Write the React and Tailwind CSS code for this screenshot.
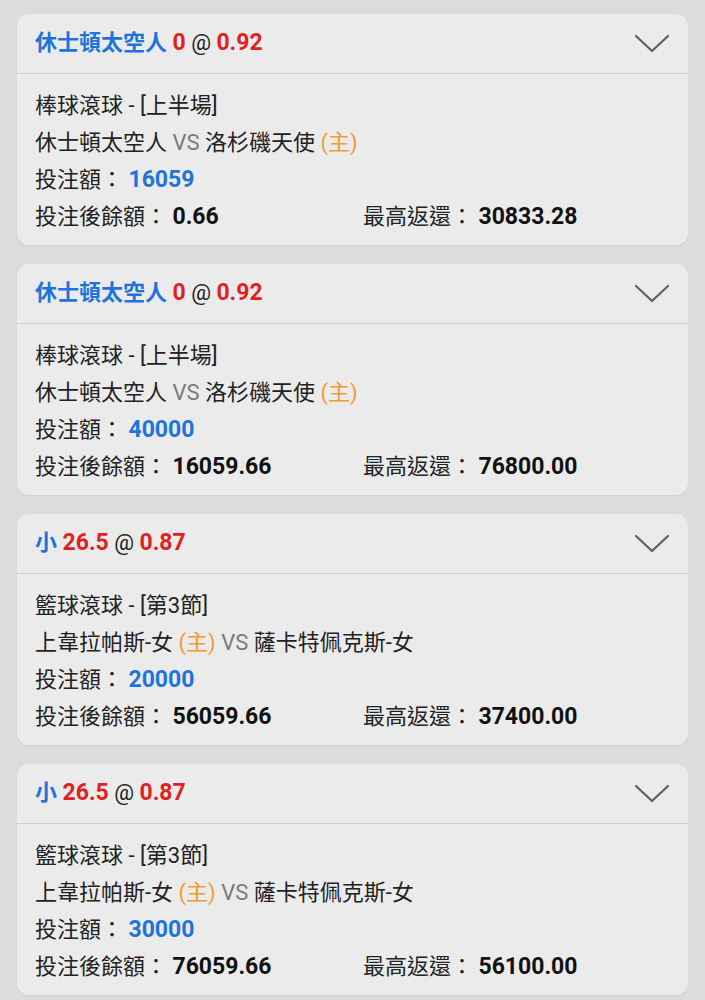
const bets = [
  {
    pick: "休士頓太空人",
    line: "0",
    odds: "0.92",
    league: "棒球滾球 - [上半場]",
    home: "休士頓太空人",
    away: "洛杉磯天使",
    homeFirst: false,
    stake: "16059",
    balance: "0.66",
    payout: "30833.28",
  },
  {
    pick: "休士頓太空人",
    line: "0",
    odds: "0.92",
    league: "棒球滾球 - [上半場]",
    home: "休士頓太空人",
    away: "洛杉磯天使",
    homeFirst: false,
    stake: "40000",
    balance: "16059.66",
    payout: "76800.00",
  },
  {
    pick: "小",
    line: "26.5",
    odds: "0.87",
    league: "籃球滾球 - [第3節]",
    home: "上韋拉帕斯-女",
    away: "薩卡特佩克斯-女",
    homeFirst: true,
    stake: "20000",
    balance: "56059.66",
    payout: "37400.00",
  },
  {
    pick: "小",
    line: "26.5",
    odds: "0.87",
    league: "籃球滾球 - [第3節]",
    home: "上韋拉帕斯-女",
    away: "薩卡特佩克斯-女",
    homeFirst: true,
    stake: "30000",
    balance: "76059.66",
    payout: "56100.00",
  },
];

const Chevron = () => (
  <svg width="36" height="22" viewBox="0 0 36 22" fill="none">
    <path d="M2 3 L18 18 L34 3" stroke="#5f5f5f" strokeWidth="2.2" strokeLinecap="round" strokeLinejoin="round" />
  </svg>
);

const Main = () => <span className="text-[#f29a2e]">(主)</span>;

const BetCard = ({ bet }) => (
  <div className="rounded-[12px] bg-[#ebebeb] shadow-[0_1px_2px_rgba(0,0,0,0.06)]">
    <div className="flex h-[60px] items-center justify-between pl-[18px] pr-[18px] border-b border-[#cfcfcf]">
      <div className="text-[22px] font-bold">
        <span className="text-[#1f74dc]">{bet.pick}</span>{" "}
        <span className="text-[23px] text-[#e0211f]">{bet.line}</span>{" "}
        <span className="font-normal text-[#222]">@</span>{" "}
        <span className="text-[23px] text-[#e0211f]">{bet.odds}</span>
      </div>
      <Chevron />
    </div>
    <div className="pl-[18px] pt-[13px] pb-[10px] text-[22px] leading-[37px] text-[#222]">
      <div>{bet.league}</div>
      <div>
        {bet.home}
        {bet.homeFirst && <> <Main /></>}
        {" "}<span className="text-[#7a7a7a]">VS</span> {bet.away}
        {!bet.homeFirst && <> <Main /></>}
      </div>
      <div>
        投注額： <span className="text-[23px] font-bold text-[#1f74dc]">{bet.stake}</span>
      </div>
      <div className="flex">
        <div className="w-[328px]">
          投注後餘額： <span className="text-[23px] font-bold text-[#111]">{bet.balance}</span>
        </div>
        <div>
          最高返還： <span className="text-[23px] font-bold text-[#111]">{bet.payout}</span>
        </div>
      </div>
    </div>
  </div>
);

export default function App() {
  return (
    <div
      className="min-h-[1000px] bg-[#dcdcdc] px-[17px] pt-[14px] pb-[4px] flex flex-col gap-[19px]"
      style={{ fontFamily: '"Roboto", "Noto Sans CJK TC", sans-serif' }}
    >
      {bets.map((b, i) => (
        <BetCard key={i} bet={b} />
      ))}
    </div>
  );
}
